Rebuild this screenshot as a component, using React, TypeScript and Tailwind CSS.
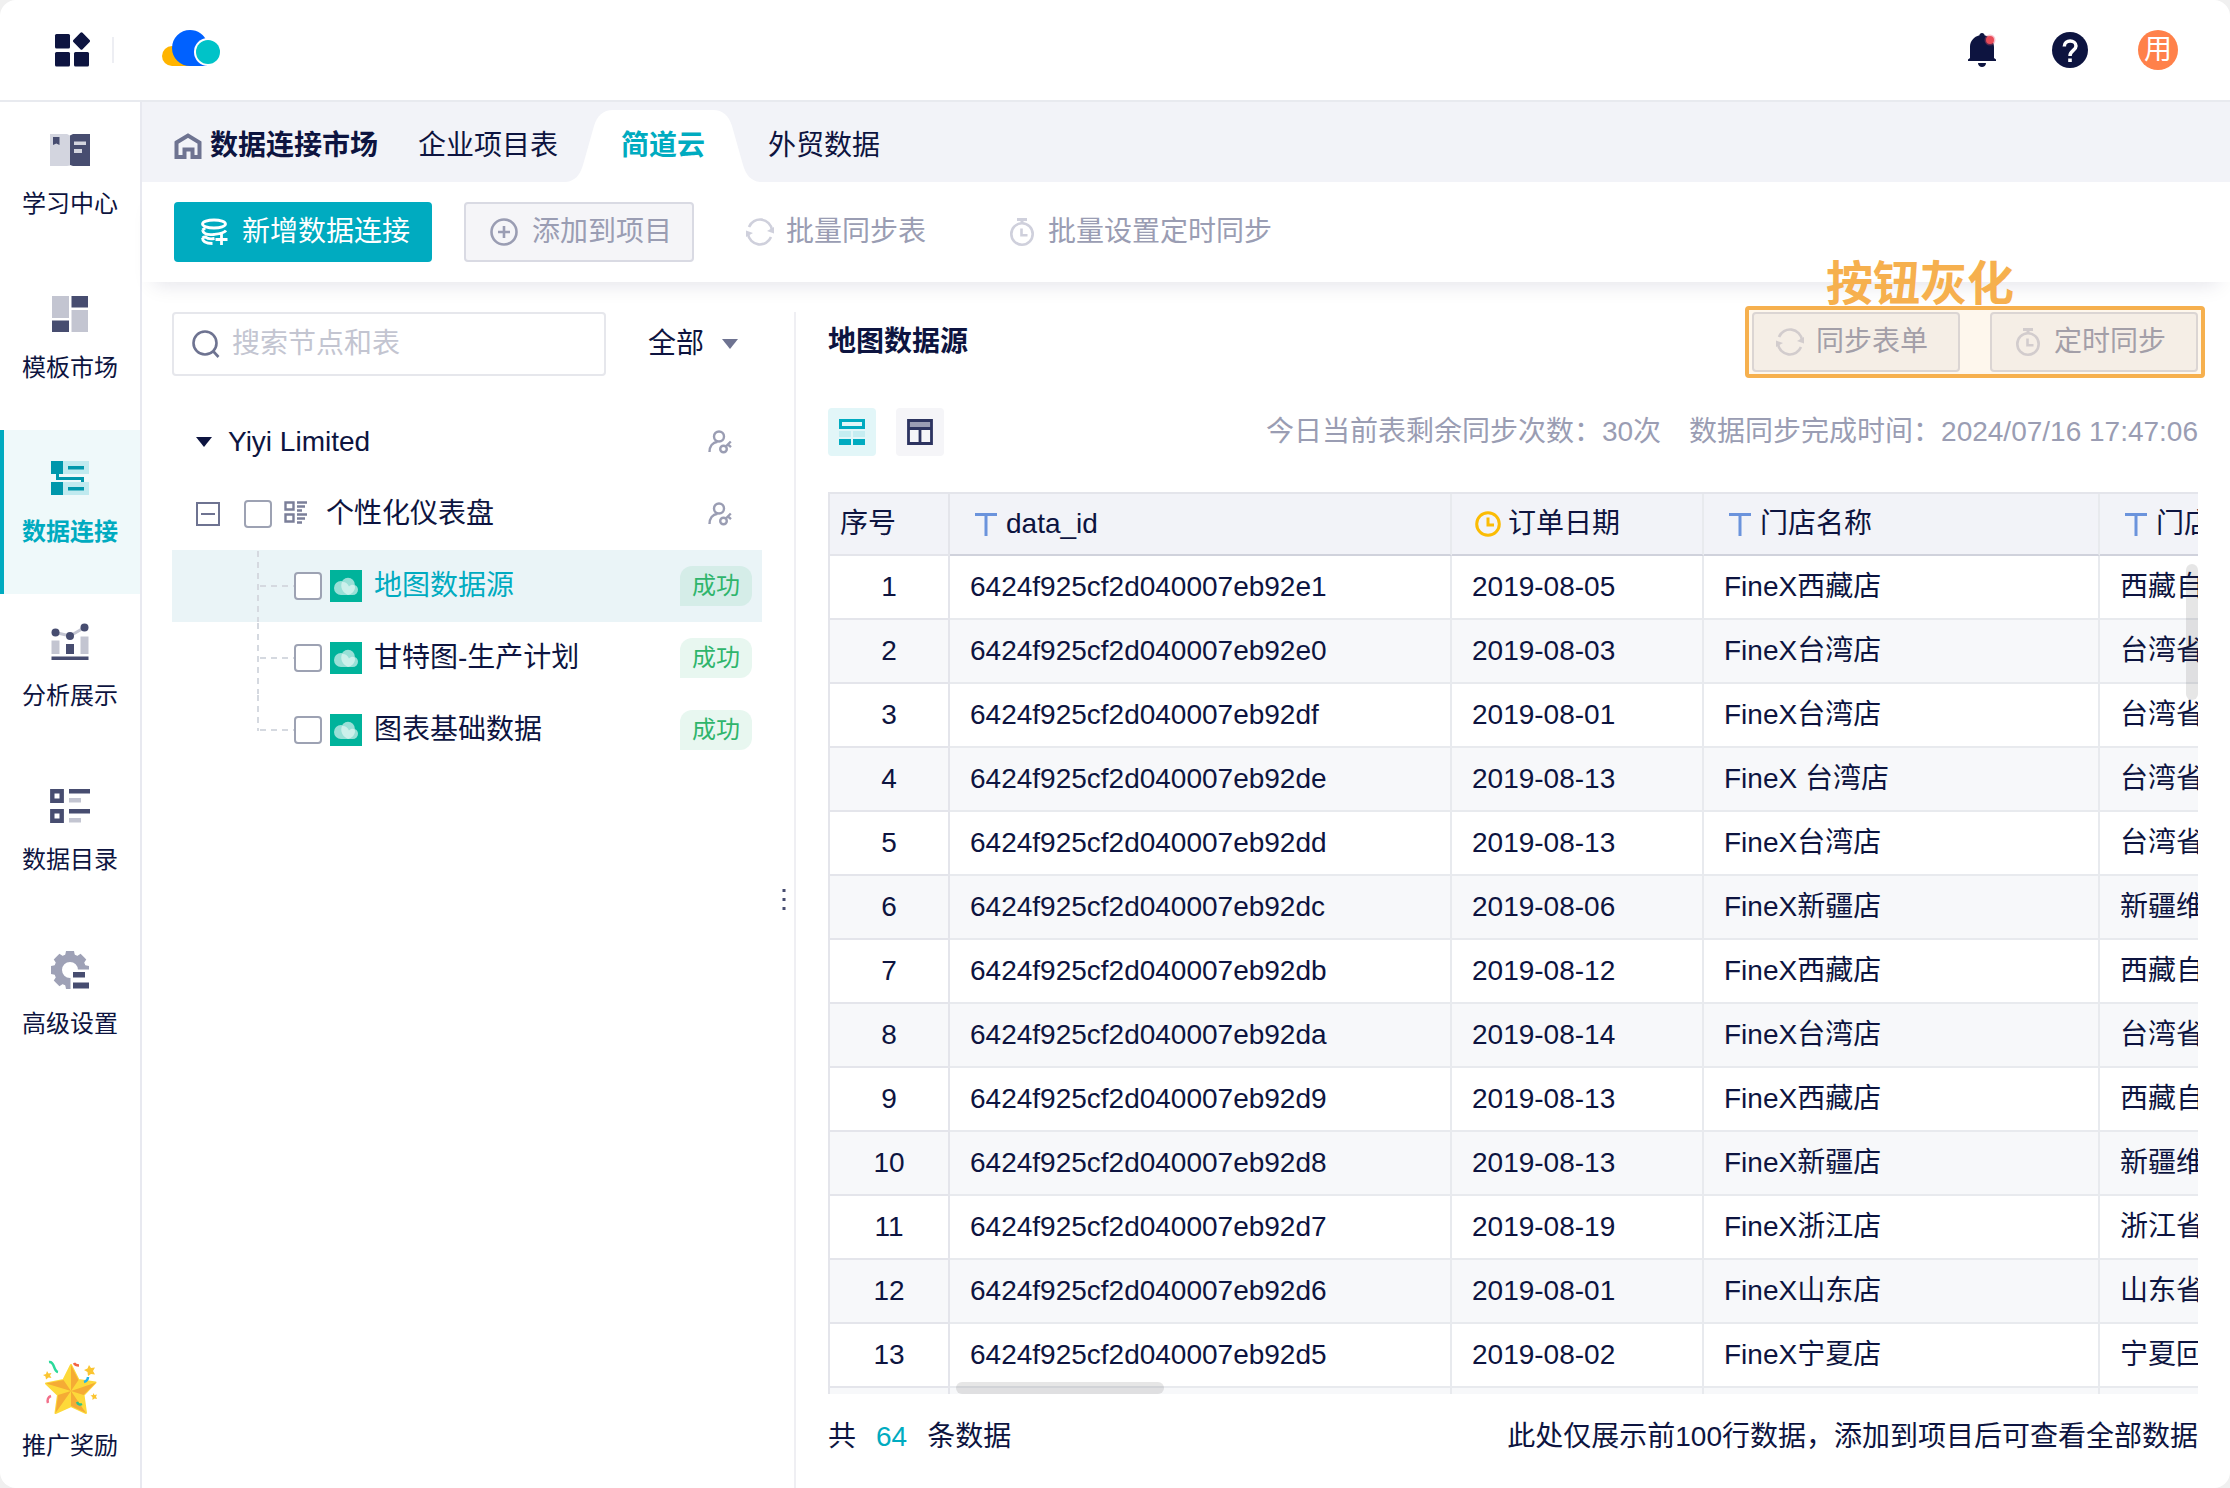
import { useState } from "react";
import type { ReactNode } from "react";

const rows = [
  ["6424f925cf2d040007eb92e1", "2019-08-05", "FineX西藏店", "西藏自治区"],
  ["6424f925cf2d040007eb92e0", "2019-08-03", "FineX台湾店", "台湾省"],
  ["6424f925cf2d040007eb92df", "2019-08-01", "FineX台湾店", "台湾省"],
  ["6424f925cf2d040007eb92de", "2019-08-13", "FineX 台湾店", "台湾省"],
  ["6424f925cf2d040007eb92dd", "2019-08-13", "FineX台湾店", "台湾省"],
  ["6424f925cf2d040007eb92dc", "2019-08-06", "FineX新疆店", "新疆维吾尔自治区"],
  ["6424f925cf2d040007eb92db", "2019-08-12", "FineX西藏店", "西藏自治区"],
  ["6424f925cf2d040007eb92da", "2019-08-14", "FineX台湾店", "台湾省"],
  ["6424f925cf2d040007eb92d9", "2019-08-13", "FineX西藏店", "西藏自治区"],
  ["6424f925cf2d040007eb92d8", "2019-08-13", "FineX新疆店", "新疆维吾尔自治区"],
  ["6424f925cf2d040007eb92d7", "2019-08-19", "FineX浙江店", "浙江省"],
  ["6424f925cf2d040007eb92d6", "2019-08-01", "FineX山东店", "山东省"],
  ["6424f925cf2d040007eb92d5", "2019-08-02", "FineX宁夏店", "宁夏回族自治区"],
  ["", "", "", ""],
];

const tables = ["地图数据源", "甘特图-生产计划", "图表基础数据"];

const DARK = "#474d70";
const LIGHT = "#c3c5d1";

const navItems: { label: string; icon: ReactNode }[] = [
  {
    label: "学习中心",
    icon: (
      <>
        <path d="M0 4h17l3 1.500v30l-3 .5H0z" fill="#d3d5df" />
        <path d="M20 5.500l3-1.500h17.500v32H23l-3-1z" fill={DARK} />
        <path d="M3 7h6.500v8l-3.200-1.500L3 15z" fill={DARK} />
        <path d="M24 11.500h12v3.500H24zM24 19h8v4h-8z" fill="#d3d5df" />
      </>
    ),
  },
  {
    label: "模板市场",
    icon: (
      <>
        <path d="M2 2h17v22H2zM21.500 16h16.500v22H21.500z" fill={LIGHT} />
        <path d="M2 26.500h17V38H2zM21.500 2h16.500v11.500H21.500z" fill={DARK} />
      </>
    ),
  },
  {
    label: "数据连接",
    icon: (
      <>
        <path d="M13 3h26v13H13zM13 24h26v13H13z" fill="#c0eaef" />
        <path d="M1 3h12v13H1zM1 24h12v13H1zM18 8h16v3.500H18zM18 29h16v3.500H18z" fill="#0097ab" />
        <path d="M7.500 15v5.500h25V24" fill="none" stroke="#0097ab" strokeWidth="3" />
      </>
    ),
  },
  {
    label: "分析展示",
    icon: (
      <>
        <path d="M5.500 10.500L20 14l14.500-8.500" fill="none" stroke={LIGHT} strokeWidth="3" />
        <path d="M1.500 18.500h8V32h-8zM30.500 14.500h8V32h-8z" fill={LIGHT} />
        <path d="M16 22h8v10h-8zM1.500 34.500h37V38h-37z" fill={DARK} />
        <circle cx="5.500" cy="10.500" r="4" fill={DARK} />
        <circle cx="20" cy="14" r="4" fill={DARK} />
        <circle cx="34.500" cy="5.500" r="4" fill={DARK} />
      </>
    ),
  },
  {
    label: "数据目录",
    icon: (
      <>
        <path d="M2.300 5.300h9.400v9.400H2.300zM2.300 25.300h9.400v9.400H2.300z" fill="none" stroke={DARK} strokeWidth="4.400" />
        <path d="M19 3h21v4.500H19zM19 23h21v4.500H19z" fill={DARK} />
        <path d="M19 12h12v4.500H19zM19 32h12v4.500H19z" fill={LIGHT} />
      </>
    ),
  },
  {
    label: "高级设置",
    icon: (
      <>
        <g fill="#9ea1b6">
          {[0, 45, 90, 135, 180, 225, 270, 315].map((a) => (
            <path key={a} d="M15 6l1-5h8l1 5z" transform={`rotate(${a} 20 20)`} />
          ))}
        </g>
        <circle cx="20" cy="20" r="12" fill="none" stroke="#9ea1b6" strokeWidth="8" />
        <path d="M20.500 19.500H40v21H20.500z" fill="#fff" />
        <path d="M23 22h12v5.500H23zM23 32.500h16v6H23z" fill={DARK} />
      </>
    ),
  },
];

function SyncIcon({ color }: { color: string }) {
  return (
    <svg width="28" height="28" viewBox="0 0 28 28" fill="none" aria-hidden="true">
      <path d="M3 9A12 12 0 0 1 26 12M25 19A12 12 0 0 1 2 16" stroke={color} strokeWidth="2.600" />
      <path d="M28 9v6.500l-7-2.500zM0 19v-6.500l7 2.500z" fill={color} />
    </svg>
  );
}

function TimerIcon({ color }: { color: string }) {
  return (
    <svg width="28" height="28" viewBox="0 0 28 28" fill="none" aria-hidden="true">
      <path d="M9 0h10v3h-3.500v2h-3V3H9z" fill={color} />
      <circle cx="14" cy="16" r="10.700" stroke={color} strokeWidth="2.600" />
      <path d="M13.500 10.500v6.800h6" stroke={color} strokeWidth="2.600" />
    </svg>
  );
}

function UserKeyIcon() {
  return (
    <svg width="24" height="24" viewBox="0 0 24 24" fill="none" stroke="#9a9db3" strokeWidth="2.400" aria-hidden="true">
      <circle cx="11" cy="6.500" r="5" />
      <path d="M1.500 22c0-5.500 3-9.500 8-10.300" />
      <circle cx="15.500" cy="19" r="3.300" />
      <path d="M17.800 16.500l5-5M20 14.500l3 2.600" />
    </svg>
  );
}

function TextTypeIcon() {
  return (
    <svg width="32" height="28" viewBox="0 0 32 28" aria-hidden="true">
      <path d="M5 3h22v3H17.500v20h-3V6H5z" fill="#6b93dc" />
    </svg>
  );
}

function DateTypeIcon() {
  return (
    <svg width="32" height="28" viewBox="0 0 32 28" fill="none" stroke="#fbbc05" aria-hidden="true">
      <circle cx="16" cy="14" r="11.300" strokeWidth="3" />
      <path d="M16 7.500V15h6" strokeWidth="3" />
    </svg>
  );
}

function CloudTableIcon() {
  return (
    <svg width="32" height="32" viewBox="0 0 32 32" className="shrink-0" aria-hidden="true">
      <path d="M0 0h32v32H0z" fill="#00b39b" />
      <g fill="#fff" opacity="0.600">
        <circle cx="11" cy="18" r="7" />
        <circle cx="18" cy="14.500" r="6.800" />
        <circle cx="22.800" cy="19.800" r="5.200" />
        <path d="M11 18h12v7H11z" />
      </g>
      <path d="M12 12c-2 5 0 10 6 13 4-1 7-4 7-8 0-3-4-3-6-.5-1-3-4-5-7-4.500z" fill="#fff" opacity="0.500" />
    </svg>
  );
}

function StarIcon() {
  return (
    <svg width="56" height="56" viewBox="0 0 56 56" aria-hidden="true">
      <path d="M29 5l7.500 15 17 2.500-12 12.500L44 53l-15-7-15.500 7L16 35 4 23.500 21.500 20z" fill="#fdd93a" stroke="#fdd93a" strokeWidth="2" strokeLinejoin="round" />
      <path d="M29 5v26l7.500-11zM54 22.500L29 31l12.500 4zM44 53L29 31v15zM13.500 53L29 31l-13 4zM4 23.500L29 31l-7.500-11z" fill="#f5ab35" />
      <path d="M7 2c6-1 4 9 9 10" fill="none" stroke="#2bd99a" strokeWidth="2.500" />
      <path d="M32 3c1 2 3 2.500 5 2.500" fill="none" stroke="#f26444" strokeWidth="2.500" />
      <path d="M46 17c0 3-1 4-4 5" fill="none" stroke="#25b4e8" strokeWidth="2.500" />
      <path d="M9 36c-3 1-4 4-3 7" fill="none" stroke="#f2708a" strokeWidth="2.500" />
      <path d="M35 42c1 2.500 3 3 5 2" fill="none" stroke="#2bc48a" strokeWidth="2.500" />
      <path d="M47 5l2 3 4-.5-2 3.500 2 3.500-4-.5-3 2-.5-4-3.500-2 3.500-1.500zM5 11l1.500 2.500 3-.5-1.500 2.500 1.500 2.500-3-.5L4 19.500l-.5-3L1 15l3-1zM51 33l1.500 2 2.500-.5-1 2 1 2.500-2.500-.5-2 1.500V37l-2-1.500 2.500-.5z" fill="#fbc531" />
    </svg>
  );
}

function ColumnHead({ icon, children }: { icon: ReactNode; children: ReactNode }) {
  return (
    <th className="border-r-2 border-b-2 border-r-[#e8eaee] border-b-[#d0d2dc] px-5 font-normal">
      <span className="flex items-center gap-1">
        {icon}
        {children}
      </span>
    </th>
  );
}

function Checkbox({ label }: { label: string }) {
  return (
    <input
      type="checkbox"
      aria-label={label}
      className="size-7 shrink-0 appearance-none rounded-sm border-2 border-[#9da2b3] bg-white checked:bg-[#00abc0]"
    />
  );
}

function Header() {
  return (
    <header className="flex h-[102px] shrink-0 items-center border-b-2 border-[#e8eaef] pr-[52px] pl-[52px]">
      <button type="button" aria-label="应用">
        <svg width="40" height="40" viewBox="0 0 40 40" fill="#0d1440">
          <rect x="3" y="4" width="15" height="14.500" rx="1.500" />
          <rect x="3" y="22" width="15" height="14.500" rx="1.500" />
          <rect x="22" y="22" width="15" height="14.500" rx="1.500" />
          <rect x="23" y="4.500" width="13" height="13" rx="1.500" transform="rotate(45 29.500 11)" />
        </svg>
      </button>
      <span className="ml-5 h-[26px] w-0.5 bg-[#edeef3]" />
      <svg className="ml-12" width="58" height="40" viewBox="0 0 58 40" aria-hidden="true">
        <path d="M10 16h20v20H10a10 10 0 0 1 0-20z" fill="#ffb400" />
        <path d="M28 0a18 18 0 0 1 17 12v24H28a18 18 0 0 1 0-36z" fill="#0061ff" />
        <path d="M46 8h12v30H46z" fill="#fff" />
        <circle cx="46" cy="22" r="14" fill="#fff" />
        <circle cx="46" cy="22" r="12" fill="#00c3c8" />
      </svg>
      <div className="ml-auto flex items-center gap-12">
        <button type="button" aria-label="消息">
          <svg width="40" height="40" viewBox="0 0 40 40">
            <path d="M20 3c1.500 0 2.500 1 2.500 2.200C28 6.500 32 11 32 17v11l2 1.500v1.500H6v-1.500L8 28V17c0-6 4-10.500 9.500-11.800C17.500 4 18.500 3 20 3zM16 33h8c0 2.500-2 4-4 4s-4-1.500-4-4z" fill="#0d1440" />
            <circle cx="28" cy="10" r="5.500" fill="#f4516c" opacity="0.350" />
            <circle cx="28" cy="10" r="4" fill="#e84c58" />
          </svg>
        </button>
        <button type="button" aria-label="帮助">
          <svg width="40" height="40" viewBox="0 0 40 40">
            <circle cx="20" cy="20" r="18" fill="#0d1440" />
            <path d="M14.300 16.500c0-7.500 11.700-7 11.700-.5 0 4.500-6 4.500-6 10" fill="none" stroke="#fff" strokeWidth="3.500" />
            <path d="M18.200 28.500h3.600V32h-3.600z" fill="#fff" />
          </svg>
        </button>
        <button type="button" className="flex size-10 items-center justify-center rounded-full bg-[#ff814a] text-white">
          用
        </button>
      </div>
    </header>
  );
}

function Sidebar() {
  return (
    <nav className="flex w-[142px] shrink-0 flex-col border-r-2 border-[#e8e9f0] text-2xl">
      {navItems.map((item) => {
        const active = item.label === "数据连接";
        return (
          <a
            key={item.label}
            href="#"
            className={
              active
                ? "flex h-[164px] flex-col items-center border-l-4 border-[#00abc0] bg-[#eff9fa] pt-7 pr-1 font-bold text-[#00abc0]"
                : "flex h-[164px] flex-col items-center pt-7"
            }
          >
            <svg width="40" height="40" viewBox="0 0 40 40" aria-hidden="true">
              {item.icon}
            </svg>
            <span className="mt-4 leading-9">{item.label}</span>
          </a>
        );
      })}
      <a href="#" className="mt-auto flex flex-col items-center pb-6">
        <StarIcon />
        <span className="mt-3 leading-9">推广奖励</span>
      </a>
    </nav>
  );
}

function TabBar() {
  return (
    <div className="flex h-20 items-end bg-[#f2f3f8] pl-8">
      <a href="#" className="flex h-[72px] items-center gap-2 font-bold">
        <svg width="28" height="28" viewBox="0 0 28 28" fill="none" stroke="#6e7391" strokeWidth="4" aria-hidden="true">
          <path d="M2.500 10.500L14 3.500l11.500 7V25h-7v-7.500h-8V25h-8z" />
        </svg>
        数据连接市场
      </a>
      <a href="#" className="ml-10 flex h-[72px] items-center">
        企业项目表
      </a>
      <a href="#" className="relative ml-2 flex h-[72px] w-[194px] items-center justify-center font-bold text-[#00abc0]">
        <svg className="absolute inset-0" width="194" height="72" viewBox="0 0 194 72" aria-hidden="true">
          <path d="M0 72c9-1 14-7 17-17l11-39C31 6 37 0 47 0h100c10 0 16 6 19 16l11 39c3 10 8 16 17 17z" fill="#fff" />
        </svg>
        <span className="relative">简道云</span>
      </a>
      <a href="#" className="ml-2 flex h-[72px] items-center">
        外贸数据
      </a>
    </div>
  );
}

function Toolbar() {
  return (
    <div className="flex h-[100px] items-center bg-white pl-8 shadow-[0_14px_20px_-12px_rgba(13,20,64,0.12)]">
      <button type="button" className="flex h-[60px] items-center gap-3.5 rounded-sm bg-[#00abc0] pr-[22px] pl-[26px] text-white">
        <svg width="28" height="28" viewBox="0 0 28 28" fill="none" stroke="#fff" strokeWidth="2.800" aria-hidden="true">
          <ellipse cx="14" cy="6" rx="11.500" ry="4" />
          <path d="M2.500 12c1 4.500 7 5 11.500 4.500s10-1 12-4M2.500 12c1-1 2-1.500 3-1.500M2.500 20c0 4 3 5.500 10 5.500M2.500 20c1-1 2-1 3-1 2 2 6 2 9 1.500M21.500 16v11M15.500 21.500h12" />
        </svg>
        新增数据连接
      </button>
      <button type="button" disabled className="ml-8 flex h-[60px] items-center gap-3.5 rounded-sm border-2 border-[#d9dae3] bg-[#f5f5f8] pr-5 pl-6 text-[#9a9db3]">
        <svg width="28" height="28" viewBox="0 0 28 28" fill="none" stroke="#9a9db3" strokeWidth="2.600" aria-hidden="true">
          <circle cx="14" cy="14" r="12.500" />
          <path d="M14 8v12M8 14h12" />
        </svg>
        添加到项目
      </button>
      <button type="button" disabled className="ml-[52px] flex items-center gap-3 text-[#9a9db3]">
        <SyncIcon color="#cfd0dc" />
        批量同步表
      </button>
      <button type="button" disabled className="ml-[82px] flex items-center gap-3 text-[#9a9db3]">
        <TimerIcon color="#cfd0dc" />
        批量设置定时同步
      </button>
    </div>
  );
}

function TreePanel() {
  const [current, setCurrent] = useState(tables[0]);

  return (
    <aside className="relative w-[654px] shrink-0 border-r-2 border-[#efeff3] pr-8 pl-[30px]">
      <div className="flex items-center">
        <label className="flex h-16 w-[434px] items-center gap-3 rounded-sm border-2 border-[#e6e7ec] px-[18px]">
          <svg width="28" height="28" viewBox="0 0 28 28" fill="none" stroke="#6e7391" strokeWidth="2.600" aria-hidden="true">
            <circle cx="13" cy="13" r="11.500" />
            <path d="M21 21l5.500 6" />
          </svg>
          <input type="text" aria-label="搜索节点和表" placeholder="搜索节点和表" className="min-w-0 flex-1 outline-none placeholder:text-[#c3c5d1]" />
        </label>
        <div className="relative ml-[42px] flex items-center">
          <select aria-label="筛选" className="w-24 appearance-none bg-transparent">
            <option>全部</option>
          </select>
          <svg className="pointer-events-none absolute right-1.5" width="16" height="10" viewBox="0 0 16 10" aria-hidden="true">
            <path d="M0 0h16L8 10z" fill="#6e7391" />
          </svg>
        </div>
      </div>

      <div className="mt-[30px] flex h-[72px] items-center pr-[30px] pl-6">
        <svg width="16" height="10" viewBox="0 0 16 10" aria-hidden="true">
          <path d="M0 0h16L8 10z" fill="#0d1440" />
        </svg>
        <span className="ml-4 flex-1">Yiyi Limited</span>
        <UserKeyIcon />
      </div>
      <div className="flex h-[72px] items-center pr-[30px] pl-6">
        <svg width="24" height="24" viewBox="0 0 24 24" fill="none" stroke="#6e7391" strokeWidth="2" aria-hidden="true">
          <path d="M1 1h22v22H1zM5 12h14" />
        </svg>
        <span className="mr-3 ml-6 flex">
          <Checkbox label="个性化仪表盘" />
        </span>
        <svg width="24" height="28" viewBox="0 0 24 28" fill="none" stroke="#7b7f99" strokeWidth="2.400" aria-hidden="true">
          <path d="M1.500 2.500h8v7h-8zM1.500 14.500h8v7h-8zM13 2.500h10M13 6.500h8M13 10.500h5M13 14.500h10M13 18.500h8M13 22.500h5" />
        </svg>
        <span className="ml-[18px] flex-1">个性化仪表盘</span>
        <UserKeyIcon />
      </div>
      {tables.map((name, i) => (
        <div
          key={name}
          className={current === name ? "flex h-[72px] items-center bg-[#eaf4f7] pr-2.5 pl-[85px]" : "flex h-[72px] items-center pr-2.5 pl-[85px]"}
        >
          <svg width="37" height="72" viewBox="0 0 37 72" fill="none" stroke="#d5d9e0" strokeWidth="2" strokeDasharray="6 5" aria-hidden="true">
            <path d={i === tables.length - 1 ? "M1 1v36" : "M1 1v71"} />
            <path d="M3 36h34" />
          </svg>
          <Checkbox label={name} />
          <span className="ml-2">
            <CloudTableIcon />
          </span>
          <button
            type="button"
            onClick={() => setCurrent(name)}
            className={current === name ? "ml-3 flex-1 text-left text-[#00abc0]" : "ml-3 flex-1 text-left"}
          >
            {name}
          </button>
          <span className="flex h-10 w-[72px] items-center justify-center rounded-xl rounded-bl-none bg-[#22b36b]/10 text-2xl text-[#2fb56c]">
            成功
          </span>
        </div>
      ))}

      {/* drag handle */}
      <svg className="absolute right-2 bottom-[576px]" width="4" height="24" viewBox="0 0 4 24" fill="#474d70" aria-hidden="true">
        <path d="M.5 1h3v3h-3zM.5 10h3v3h-3zM.5 19h3v3h-3z" />
      </svg>
    </aside>
  );
}

function DataTable() {
  return (
    <div className="relative mt-9 min-h-0 flex-1 overflow-hidden">
      <table className="w-[1832px] table-fixed border-separate border-spacing-0 border-t-2 border-l-2 border-[#e4e5eb] text-left">
        <colgroup>
          <col className="w-[120px]" />
          <col className="w-[502px]" />
          <col className="w-[252px]" />
          <col className="w-[396px]" />
          <col />
        </colgroup>
        <thead>
          <tr className="h-[62px] bg-[#f2f3f8]">
            <th className="border-r-2 border-b-2 border-[#e4e5eb] px-2.5 font-normal">序号</th>
            <ColumnHead icon={<TextTypeIcon />}>data_id</ColumnHead>
            <ColumnHead icon={<DateTypeIcon />}>订单日期</ColumnHead>
            <ColumnHead icon={<TextTypeIcon />}>门店名称</ColumnHead>
            <ColumnHead icon={<TextTypeIcon />}>门店省份</ColumnHead>
          </tr>
        </thead>
        <tbody>
          {rows.map((row, i) => (
            <tr key={i} className="h-16 even:bg-[#f7f8fa]">
              <td className="border-r-2 border-b-2 border-[#e4e5eb] text-center">{row[0] && i + 1}</td>
              {row.map((cell, j) => (
                <td key={j} className="overflow-hidden border-r-2 border-b-2 border-[#e8eaee] px-5 whitespace-nowrap">
                  {cell}
                </td>
              ))}
            </tr>
          ))}
        </tbody>
      </table>
      <span className="absolute top-[72px] right-0 h-[136px] w-3 rounded-full bg-[#303133]/12" />
      <span className="absolute bottom-0 left-32 h-3 w-52 rounded-full bg-[#303133]/12" />
    </div>
  );
}

function DataPanel() {
  return (
    <section className="flex min-w-0 flex-1 flex-col px-8">
      <div className="flex h-[60px] shrink-0 items-center justify-between">
        <h1 className="font-bold">地图数据源</h1>
        <div className="relative flex gap-[30px]">
          <button type="button" disabled className="flex h-[60px] w-[208px] items-center gap-3 rounded-sm border-2 border-[#d9dae3] bg-[#f5f5f8] pl-[22px] text-[#9a9db3]">
            <SyncIcon color="#cfd0dc" />
            同步表单
          </button>
          <button type="button" disabled className="flex h-[60px] w-[208px] items-center gap-3 rounded-sm border-2 border-[#d9dae3] bg-[#f5f5f8] pl-[22px] text-[#9a9db3]">
            <TimerIcon color="#cfd0dc" />
            定时同步
          </button>
          <div className="pointer-events-none absolute -inset-x-[7px] -inset-y-1.5 rounded-sm border-4 border-[#f6b04e] bg-[#f6b04e]/10" />
          <strong className="absolute -top-[58px] left-[74px] text-[47px] leading-[60px] whitespace-nowrap text-[#f6b04e]">按钮灰化</strong>
        </div>
      </div>

      <div className="mt-9 flex shrink-0 items-center">
        <button type="button" aria-label="数据预览" className="flex size-12 items-center justify-center rounded-sm bg-[#e2f6f8]">
          <svg width="26" height="26" viewBox="0 0 26 26">
            <path d="M1.500 1.500h23v7h-23z" fill="none" stroke="#00abc0" strokeWidth="3" />
            <path d="M0 12h12v6H0zM14 12h12v6H14z" fill="#c5edf1" />
            <path d="M0 20h12v6H0zM14 20h12v6H14z" fill="#00abc0" />
          </svg>
        </button>
        <button type="button" aria-label="表结构" className="ml-5 flex size-12 items-center justify-center rounded-sm bg-[#f5f5f8]">
          <svg width="26" height="26" viewBox="0 0 26 26" fill="none">
            <path d="M2 2h22v7H2z" fill="#9a9db3" />
            <path d="M1.500 1.500h23v23h-23zM1.500 9.500h23M13 9.500v15" stroke="#2d3460" strokeWidth="2.800" />
          </svg>
        </button>
        <p className="ml-auto flex gap-7 text-[#9a9db3]">
          <span>今日当前表剩余同步次数：30次</span>
          <span>数据同步完成时间：2024/07/16 17:47:06</span>
        </p>
      </div>

      <DataTable />

      <footer className="mb-2 flex h-[86px] shrink-0 items-center justify-between">
        <p className="flex gap-5">
          <span>共</span>
          <span className="text-[#00abc0]">64</span>
          <span>条数据</span>
        </p>
        <p>此处仅展示前100行数据，添加到项目后可查看全部数据</p>
      </footer>
    </section>
  );
}

export default function App() {
  return (
    <div className="h-screen bg-[#f0f0f0] font-['Liberation_Sans','Noto_Sans_CJK_SC',sans-serif] text-[28px] leading-10 text-[#0d1440]">
      <div className="flex h-full flex-col overflow-hidden rounded-2xl bg-white">
        <Header />
        <div className="flex min-h-0 flex-1">
          <Sidebar />
          <main className="flex min-w-0 flex-1 flex-col">
            <TabBar />
            <Toolbar />
            <div className="mt-[30px] flex min-h-0 flex-1">
              <TreePanel />
              <DataPanel />
            </div>
          </main>
        </div>
      </div>
    </div>
  );
}
